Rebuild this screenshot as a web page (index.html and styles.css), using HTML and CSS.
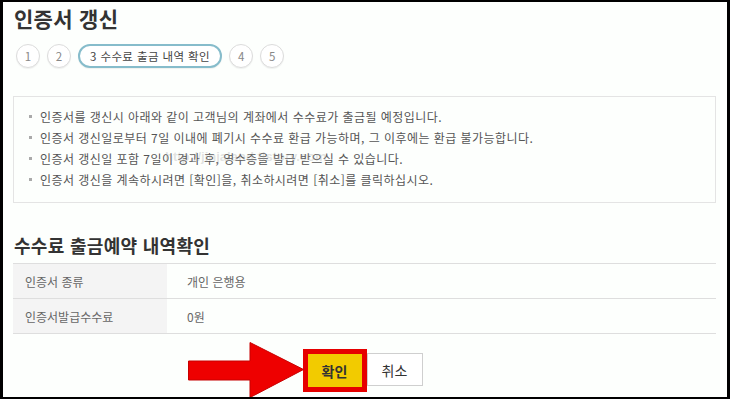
FILE: index.html
```html
<!DOCTYPE html>
<html lang="ko">
<head>
<meta charset="utf-8">
<title>인증서 갱신</title>
<link rel="stylesheet" href="styles.css">
</head>
<body>
<div class="frame">
  <h1 class="title">인증서 갱신</h1>
  <ol class="steps">
    <li class="step">1</li>
    <li class="step">2</li>
    <li class="step step-active">3 수수료 출금 내역 확인</li>
    <li class="step">4</li>
    <li class="step">5</li>
  </ol>
  <div class="notice">
    <ul class="notice-list">
      <li>인증서를 갱신시 아래와 같이 고객님의 계좌에서 수수료가 출금될 예정입니다.</li>
      <li>인증서 갱신일로부터 7일 이내에 폐기시 수수료 환급 가능하며, 그 이후에는 환급 불가능합니다.</li>
      <li>인증서 갱신일 포함 7일이 경과 후, 영수증을 발급 받으실 수 있습니다.</li>
      <li>인증서 갱신을 계속하시려면 [확인]을, 취소하시려면 [취소]를 클릭하십시오.</li>
    </ul>
    <span class="watermark">http://jinjaland.tistory.com</span>
  </div>
  <h2 class="section-title">수수료 출금예약 내역확인</h2>
  <div class="table">
    <div class="row">
      <div class="label">인증서 종류</div>
      <div class="value">개인 은행용</div>
    </div>
    <div class="row">
      <div class="label">인증서발급수수료</div>
      <div class="value">0원</div>
    </div>
  </div>
  <div class="actions">
    <button class="btn btn-ok">확인</button>
    <button class="btn btn-cancel">취소</button>
  </div>
  <svg class="arrow" width="117" height="57" viewBox="0 0 117 57">
    <polygon points="0.5,19 62,19 62,0.5 115.5,27.5 62,55.5 62,38 0.5,38" fill="#ee0000" stroke="#c80000" stroke-width="1"/>
  </svg>
</div>
</body>
</html>
```
FILE: styles.css
```css
* { box-sizing: border-box; }
html, body { margin: 0; padding: 0; background: #fff; }
body {
  font-family: "Noto Sans CJK KR", "Noto Sans", sans-serif;
  color: #333;
}
.frame {
  position: relative;
  width: 730px;
  height: 399px;
  border: 2px solid #000;
  border-left-width: 3px;
  border-right-width: 3px;
  background: #fdfffd;
  padding: 3px 11px 0 10px;
  overflow: hidden;
}
.title {
  margin: 0 0 0 1px;
  font-size: 21px;
  line-height: 26px;
  font-weight: 700;
  color: #333;
  letter-spacing: 0.3px;
}
.steps {
  list-style: none;
  margin: 13px 0 0 3px;
  padding: 0;
  display: flex;
  gap: 7px;
}
.step {
  height: 24px;
  min-width: 24px;
  border: 1px solid #dcdcdc;
  border-radius: 12px;
  display: flex;
  align-items: center;
  justify-content: center;
  font-size: 11.5px;
  color: #888;
  box-shadow: 0 1px 1px rgba(0,0,0,0.06);
  background: #fff;
}
.step-active {
  border: 2px solid #86bccb;
  padding: 0 10px;
  color: #444;
  letter-spacing: 0.4px;
}
.notice {
  position: relative;
  margin-top: 28px;
  border: 1px solid #e4e4e4;
  padding: 9px 15px 12px;
}
.notice-list {
  list-style: none;
  margin: 0;
  padding: 0;
  font-size: 12px;
  line-height: 21px;
  color: #555;
  letter-spacing: 0.45px;
}
.notice-list li {
  display: flex;
  align-items: center;
  gap: 8px;
}
.notice-list li::before {
  content: "";
  width: 3px;
  height: 3px;
  background: #aaa;
  flex: none;
}
.watermark {
  position: absolute;
  left: 151px;
  top: 52px;
  font-size: 13px;
  font-weight: 700;
  color: rgba(160,160,160,0.3);
  font-family: "Liberation Sans", sans-serif;
}
.section-title {
  margin: 30px 0 6px 1px;
  font-size: 18px;
  line-height: 24px;
  font-weight: 700;
  color: #333;
  letter-spacing: 0.3px;
}
.table {
  border-top: 1px solid #dedede;
}
.row {
  display: flex;
  height: 35px;
  border-bottom: 1px solid #dedede;
  font-size: 12px;
  color: #666;
}
.label {
  width: 154px;
  background: #f4f4f4;
  padding-left: 12px;
  display: flex;
  align-items: center;
}
.value {
  padding-left: 20px;
  display: flex;
  align-items: center;
}
.actions {
  display: flex;
  justify-content: center;
  align-items: flex-start;
  gap: 5px;
  margin-top: 19px;
  padding-left: 1px;
}
.btn {
  font-family: "Noto Sans CJK KR", sans-serif;
  font-size: 14px;
  height: 33px;
  padding: 0;
  cursor: pointer;
}
.btn-ok {
  width: 54px;
  margin-top: 1px;
  background: #f2cb00;
  border: none;
  color: #333;
  font-weight: 700;
  outline: 5px solid #e60000;
}
.btn-cancel {
  width: 56px;
  background: #fff;
  border: 1px solid #cfcfcf;
  color: #333;
}
.arrow {
  position: absolute;
  left: 185px;
  top: 340px;
}
```
